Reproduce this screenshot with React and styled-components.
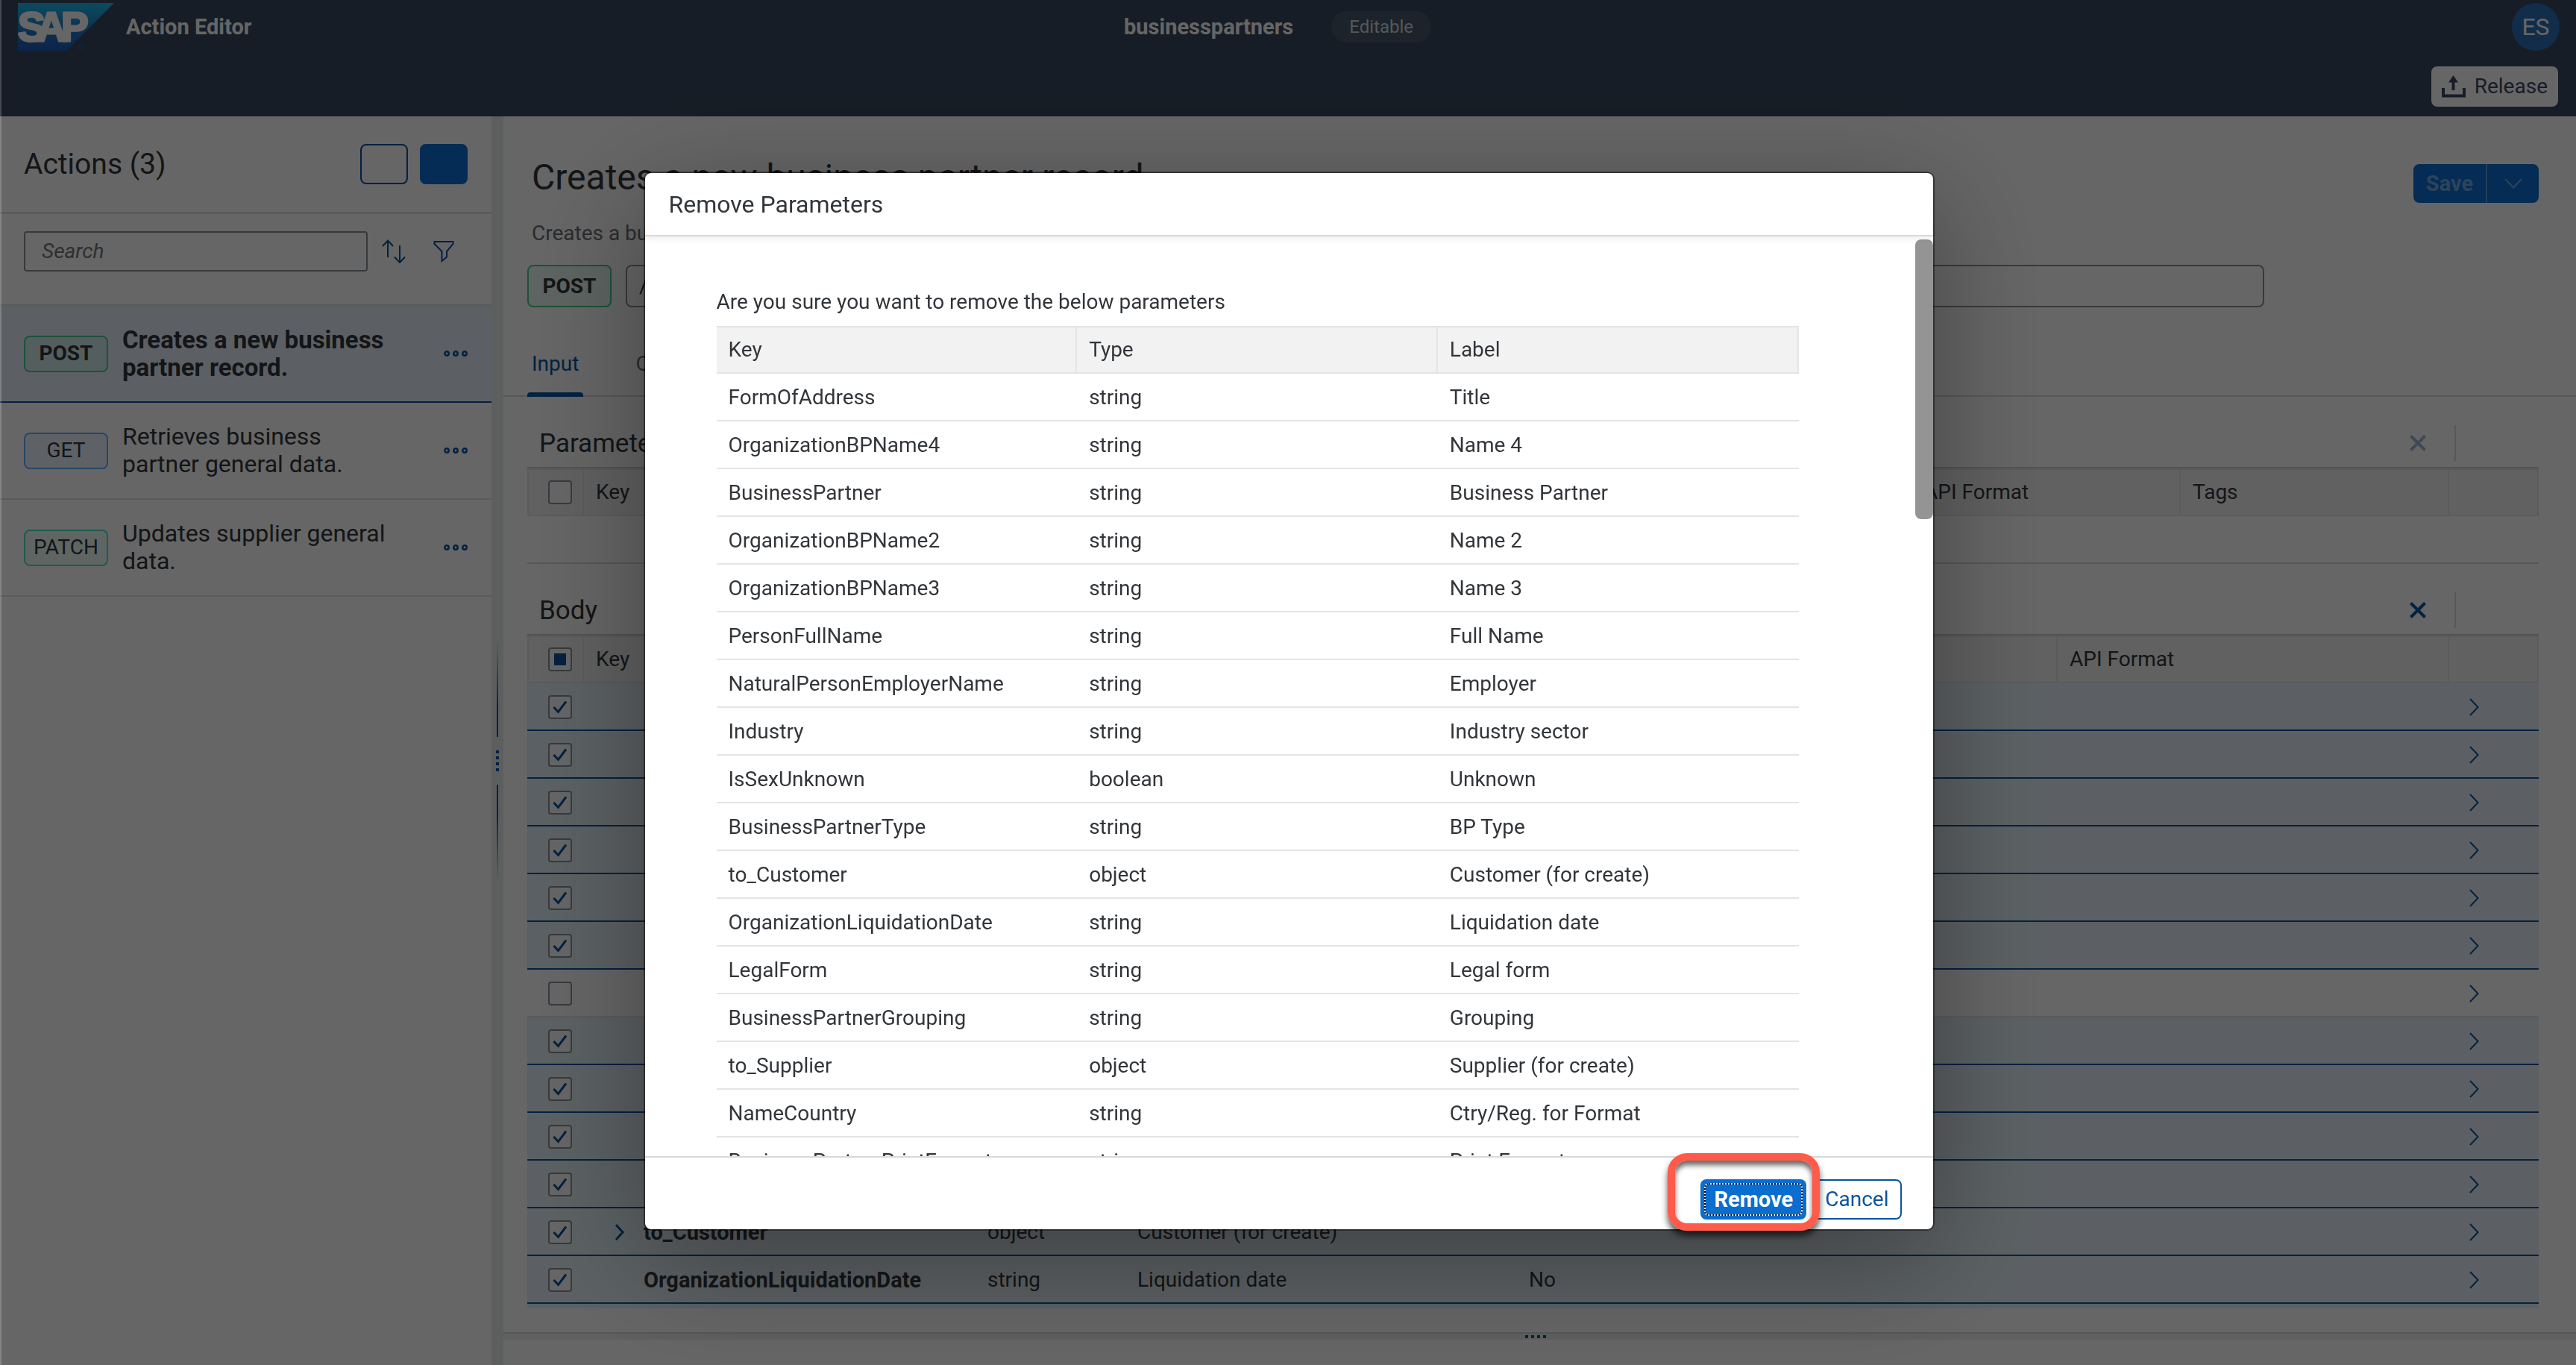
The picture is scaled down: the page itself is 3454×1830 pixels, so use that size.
import React from "react";
import styled, { createGlobalStyle, css } from "styled-components";

const GlobalStyle = createGlobalStyle`
  *, *::before, *::after { box-sizing: border-box; }
  html, body { height: 100%; }
  #root { height: 100%; }
  body {
    margin: 0;
    background: #fff;
    color: #32363a;
    font-family: Roboto, "Liberation Sans", sans-serif;
    font-size: 28px;
    line-height: 40px;
    overflow: hidden;
  }
  button, input { font: inherit; color: inherit; margin: 0; }
  button { padding: 0; border: 0; background: none; cursor: pointer; }
  h1, h2, p { margin: 0; font-weight: 400; }
`;

const brand = "#0854a0";
const line = "#e4e4e4";
const selectedFill = "#e5f1f9";

/* ---------- shell ---------- */

const Page = styled.div`
  height: 100vh;
  display: flex;
  flex-direction: column;
`;

const Header = styled.header`
  flex: none;
  background: #3a495f;
  color: #fff;
`;

const ShellBar = styled.div`
  display: grid;
  grid-template-columns: 1fr auto 1fr;
  align-items: center;
  height: 72px;
  padding: 0 22px 0 24px;
`;

const Brand = styled.div`
  display: flex;
  align-items: center;
  gap: 16px;
  font-size: 29px;
  font-weight: 700;
`;

const Project = styled.div`
  display: flex;
  align-items: center;
  gap: 51px;
  padding-right: 30px;
  font-size: 29px;
  font-weight: 700;
`;

const Pill = styled.span`
  padding: 0 24px;
  border-radius: 21px;
  background: #47596b;
  color: #d5dade;
  font-size: 24px;
  font-weight: 400;
  line-height: 42px;
`;

const Avatar = styled.button`
  justify-self: end;
  width: 64px;
  height: 64px;
  border-radius: 50%;
  background: #2c72b8;
  font-size: 32px;
`;

const ReleaseBar = styled.div`
  display: flex;
  justify-content: flex-end;
  height: 84px;
  padding: 17px 24px 0 0;
`;

const ReleaseButton = styled.button`
  display: flex;
  align-items: center;
  gap: 12px;
  height: 54px;
  padding: 0 14px;
  border-radius: 8px;
  background: #fff;
  color: #3a495f;
`;

const Workspace = styled.div`
  flex: 1;
  min-height: 0;
  display: grid;
  grid-template-columns: 659px 16px minmax(0, 1fr);
`;

/* ---------- side list ---------- */

const SideHeader = styled.div`
  display: flex;
  align-items: center;
  gap: 16px;
  height: 131px;
  padding: 0 32px;
  border-bottom: 3px solid ${line};
`;

const SideTitle = styled.h2`
  flex: 1;
  font-size: 39px;
`;

const SquareButton = styled.button`
  width: 64px;
  height: 54px;
  border: 2px solid ${(p) => (p.$filled ? "#0a6ed1" : brand)};
  border-radius: 8px;
  background: ${(p) => (p.$filled ? "#0a6ed1" : "transparent")};
`;

const SearchRow = styled.div`
  display: flex;
  align-items: center;
  gap: 19px;
  height: 123px;
  padding: 0 50px 22px 32px;
  border-bottom: 2px solid ${line};
`;

const SearchInput = styled.input`
  flex: 1;
  min-width: 0;
  height: 54px;
  padding: 0 22px;
  border: 2px solid #89919a;
  border-radius: 4px;
  background: #fff;
  &::placeholder { color: #74777a; font-style: italic; opacity: 1; }
`;

const IconButton = styled.button`
  display: grid;
  place-items: center;
  color: ${brand};
  opacity: ${(p) => (p.disabled ? 0.4 : 1)};
`;

const FilterButton = styled(IconButton)`
  padding-left: 18px;
`;

const ActionList = styled.ul`
  margin: 0;
  padding: 0;
  list-style: none;
`;

const ActionItem = styled.li`
  display: flex;
  align-items: center;
  height: 130px;
  padding: 0 32px;
  border-bottom: 2px solid ${(p) => (p.$selected ? brand : line)};
  background: ${(p) => (p.$selected ? selectedFill : "#fff")};
  font-weight: ${(p) => (p.$selected ? 700 : 400)};
`;

const methods = {
  POST: ["#49cc90", "rgba(73, 204, 144, .12)"],
  GET: ["#61affe", "rgba(97, 175, 254, .12)"],
  PATCH: ["#50e3c2", "rgba(80, 227, 194, .12)"],
};

const Method = styled.span`
  flex: none;
  display: grid;
  place-items: center;
  width: 113px;
  height: ${(p) => (p.$tall ? 57 : 49)}px;
  border: 2px solid ${(p) => methods[p.$kind][0]};
  border-radius: 8px;
  background: ${(p) => methods[p.$kind][1]};
  font-weight: ${(p) => (p.$bold ? 700 : 400)};
`;

const ActionText = styled.span`
  flex: 1;
  padding: 0 64px 0 19px;
  font-size: ${(p) => (p.$selected ? 33 : 32)}px;
  line-height: 37px;
`;

/* ---------- splitters ---------- */

const Splitter = styled.div`
  display: flex;
  flex-direction: column;
  align-items: center;
  justify-content: center;
  gap: 18px;
  padding-top: 54px;
  background: #e6eeea;
`;

const SplitLine = styled.i`
  width: 2px;
  height: 128px;
  background: linear-gradient(${(p) => (p.$up ? "to top" : "to bottom")}, ${brand} 30%, transparent);
`;

const Grip = styled.span`
  display: flex;
  flex-direction: ${(p) => (p.$row ? "row" : "column")};
  gap: 4px;
  i { width: 4px; height: 4px; background: ${brand}; }
`;

const FootSplitter = styled.div`
  flex: none;
  display: grid;
  place-items: center;
  height: 10px;
  padding-right: 12px;
  border-top: 2px solid #d9d9d9;
  background: #e9efec;
`;

const FootPanel = styled.div`
  flex: none;
  height: 34px;
`;

/* ---------- detail ---------- */

const Main = styled.main`
  display: flex;
  flex-direction: column;
  min-height: 0;
`;

const Detail = styled.div`
  flex: 1;
  min-height: 0;
  overflow: hidden;
`;

const DetailHeader = styled.div`
  padding: 53px 50px 0 32px;
`;

const TitleRow = styled.div`
  display: flex;
  justify-content: space-between;
  height: 63px;
  padding-left: 6px;
`;

const Title = styled.h1`
  font-size: 48px;
  line-height: 58px;
`;

const Subtitle = styled.p`
  padding: 21px 0 0 6px;
  color: #6a6d70;
`;

const SaveGroup = styled.div`
  align-self: flex-end;
  display: flex;
  height: 52px;
  border-radius: 8px;
  background: #0a6ed1;
  color: #73a9df;
`;

const SaveButton = styled.button`
  width: 99px;
  border-right: 2px solid #5f98cf;
  font-size: 29px;
  font-weight: 700;
`;

const SaveMenu = styled.button`
  display: grid;
  place-items: center;
  width: 69px;
`;

const PathRow = styled.div`
  display: flex;
  gap: 19px;
  padding: 22px 368px 0 0;
`;

const PathInput = styled.input`
  flex: 1;
  height: 57px;
  padding: 0 16px;
  border: 2px solid #89919a;
  border-radius: 8px;
  background: #fff;
  &::placeholder { color: #32363a; opacity: 1; }
`;

const Tabs = styled.nav`
  display: flex;
  gap: 64px;
  margin-top: 30px;
  padding-left: 32px;
  border-bottom: 2px solid #d9d9d9;
`;

const Tab = styled.button`
  position: relative;
  height: 88px;
  padding: 4px 6px 0;
  color: ${(p) => (p.$active ? brand : "#6a6d70")};
  ${(p) =>
    p.$active &&
    css`
      &::after {
        content: "";
        position: absolute;
        inset: auto 0 -2px;
        height: 6px;
        border-radius: 4px 4px 0 0;
        background: ${brand};
      }
    `}
`;

const Section = styled.section`
  padding: 30px 50px 0 32px;
`;

const Toolbar = styled.div`
  display: flex;
  align-items: center;
  gap: 38px;
  height: 64px;
  padding: 0 111px 0 16px;
`;

const SectionTitle = styled.h2`
  flex: 1;
  padding-top: 2px;
  font-size: 35px;
`;

const Divider = styled.i`
  width: 2px;
  height: 48px;
  background: #d9d9d9;
`;

const Grid = styled.table`
  width: 100%;
  border-collapse: separate;
  border-spacing: 0;
  table-layout: fixed;
  border-top: 2px solid #d0d0d0;
`;

const Col = styled.col`
  width: ${(p) => (p.$w ? `${p.$w}px` : "auto")};
`;

const HeadCell = styled.th`
  height: 64px;
  padding: 0 16px;
  border: solid ${line};
  border-width: 2px 2px 2px 0;
  background: #f2f2f2;
  font-weight: 400;
  text-align: left;
  &:first-child { border-left-width: 2px; padding: 0 0 0 26px; }
`;

const Row = styled.tr`
  background: ${(p) => (p.$selected ? selectedFill : "#fff")};
  td { border-bottom: 2px solid ${(p) => (p.$selected ? brand : p.$strong ? "#d9d9d9" : line)}; }
`;

const Cell = styled.td`
  height: 64px;
  padding: 2px 16px 0;
  white-space: nowrap;
  &:first-child { padding: 2px 0 0 28px; }
`;

const NavCell = styled(Cell)`
  padding-left: 27px;
`;

const KeyName = styled.div`
  display: flex;
  align-items: center;
  font-size: 29px;
  font-weight: 700;
`;

const ExpandSlot = styled.span`
  display: flex;
  width: 64px;
  padding-left: 25px;
`;

const NextRowEdge = styled.div`
  height: 6px;
  background: ${selectedFill};
`;

const CheckLabel = styled.label`
  display: grid;
  width: 32px;
  height: 32px;
  place-items: center;
  > * { grid-area: 1 / 1; }
  svg { pointer-events: none; }
`;

const CheckBox = styled.input`
  appearance: none;
  width: 32px;
  height: 32px;
  border: 2px solid #89919a;
  border-radius: 4px;
  background: #fff;
`;

/* ---------- dialog ---------- */

const Overlay = styled.div`
  position: fixed;
  inset: 0;
  display: flex;
  justify-content: center;
  padding: 232px 0 182px;
  border-left: 2px solid rgba(255, 255, 255, 0.2);
  background: rgba(0, 0, 0, 0.6);
`;

const Dialog = styled.div`
  display: flex;
  flex-direction: column;
  width: 50vw;
  border-radius: 8px;
  background: #fff;
  box-shadow: 0 0 0 2px rgba(0, 0, 0, 0.42), 0 40px 160px rgba(0, 0, 0, 0.36);
`;

const DialogHeader = styled.div`
  position: relative;
  flex: none;
  height: 85px;
  padding: 0 32px;
  border-bottom: 2px solid #d9d9d9;
  box-shadow: 0 4px 8px rgba(0, 0, 0, 0.06);
`;

const DialogTitle = styled.h2`
  font-size: 32px;
  line-height: 84px;
`;

const DialogBody = styled.div`
  flex: 1;
  min-height: 0;
  display: flex;
  justify-content: space-between;
`;

const DialogContent = styled.div`
  flex: 1;
  overflow: hidden;
  padding: 68px 156px 0 96px;
`;

const Question = styled.p`
  padding-bottom: 12px;
`;

const ScrollTrack = styled.div`
  flex: none;
  width: 24px;
  padding-top: 4px;
`;

const ScrollThumb = styled.div`
  height: 375px;
  border-radius: 8px;
  background: #949494;
`;

const ParamTable = styled.table`
  width: 100%;
  border-spacing: 0;
  table-layout: fixed;
  th, td {
    height: 64px;
    padding: 0 16px;
    border-bottom: 2px solid ${line};
    text-align: left;
    font-weight: 400;
    white-space: nowrap;
  }
  td { padding-top: 2px; }
  th {
    border-top: 2px solid ${line};
    border-right: 2px solid ${line};
    background: #f2f2f2;
  }
`;

const DialogFooter = styled.div`
  flex: none;
  display: flex;
  justify-content: flex-end;
  gap: 8px;
  height: 98px;
  padding: 29px 42px 0 0;
  border-top: 2px solid #d9d9d9;
`;

const Highlight = styled.span`
  position: relative;
  height: 54px;
  &::after {
    content: "";
    position: absolute;
    inset: -35px -18px -15px -44px;
    border: 10px solid #ff5a4a;
    border-radius: 26px;
    box-shadow: 0 7px 8px rgba(0, 0, 0, 0.65), inset 0 6px 7px rgba(0, 0, 0, 0.6);
    pointer-events: none;
  }
`;

const RemoveButton = styled.button`
  position: relative;
  width: 142px;
  height: 54px;
  border-radius: 8px;
  background: #0a6ed1;
  color: #fff;
  font-size: 29px;
  font-weight: 700;
  &::before, &::after {
    content: "";
    position: absolute;
    inset: 5px;
    border: 2px solid #fff;
    border-radius: 6px;
  }
  &::after { border: 2px dotted #000; }
`;

const CancelButton = styled.button`
  height: 54px;
  padding: 0 15px;
  border: 2px solid ${brand};
  border-radius: 8px;
  color: ${brand};
`;

/* ---------- drawings ---------- */

const SapLogo = () => (
  <svg width="129" height="64" viewBox="0 0 129 64" role="img" aria-label="SAP">
    <defs>
      <linearGradient id="sap" x1="0" y1="0" x2="0" y2="1">
        <stop offset="0" stopColor="#1fbcec" />
        <stop offset="0.5" stopColor="#1f7fcc" />
        <stop offset="1" stopColor="#2059bb" />
      </linearGradient>
    </defs>
    <polygon points="0,0 129,0 65,64 0,64" fill="url(#sap)" />
    <text x="0 25 58" y="51" fill="#fff" fontFamily="Liberation Sans, sans-serif" fontWeight="700" fontSize="55" stroke="#fff" strokeWidth="3">SAP</text>
    <circle cx="84" cy="59" r="4" fill="none" stroke="#2059bb" />
    <path d="M82.500 61.500v-5h2q1 1.500 -2 2.500l3 2.500" fill="none" stroke="#2059bb" />
  </svg>
);

const ReleaseIcon = () => (
  <svg width="32" height="30" viewBox="0 0 32 30" fill="none" stroke="currentColor">
    <path d="M2 17v10.500h28V17" strokeWidth="4" />
    <path d="M15.500 20V8" strokeWidth="4" />
    <path d="M9 9.500L15.500 0L22 9.500z" fill="currentColor" stroke="none" />
  </svg>
);

const SortIcon = () => (
  <svg width="32" height="32" viewBox="0 0 32 32" fill="none" stroke="currentColor" strokeWidth="2">
    <path d="M8 24V1M1 9L8 1.500L15 9M24 8v23M17 23.500L24 31L31 23.500" />
  </svg>
);

const FilterIcon = () => (
  <svg width="28" height="30" viewBox="0 0 28 30" fill="none" stroke="currentColor" strokeWidth="2">
    <path d="M1.500 2h25v3L18 15v7.500L11.500 28V15L1.500 5z" />
  </svg>
);

const MoreIcon = () => (
  <svg width="32" height="10" viewBox="0 0 32 10" fill="none" stroke="currentColor" strokeWidth="2.500">
    <circle cx="4" cy="5" r="2.700" />
    <circle cx="16" cy="5" r="2.700" />
    <circle cx="28" cy="5" r="2.700" />
  </svg>
);

const CloseIcon = () => (
  <svg width="22" height="22" viewBox="0 0 22 22" fill="none" stroke="currentColor" strokeWidth="4">
    <path d="M1.500 1.500l19 19M20.500 1.500l-19 19" />
  </svg>
);

const ChevronRight = ({ bold }) => (
  <svg width="13" height="24" viewBox="0 0 13 24" fill="none" stroke={brand} strokeWidth={bold ? 3 : 2}>
    <path d={bold ? "M2 2l9 10-9 10" : "M1 1l10.500 11L1 23"} />
  </svg>
);

const ChevronDown = () => (
  <svg width="24" height="14" viewBox="0 0 24 14" fill="none" stroke="currentColor" strokeWidth="2">
    <path d="M1 1l11 11.500L23 1" />
  </svg>
);

function Check({ label, state }) {
  return (
    <CheckLabel>
      <CheckBox type="checkbox" aria-label={label} checked={state === "on"} readOnly />
      {state === "on" && (
        <svg width="20" height="20" viewBox="0 0 20 20" fill="none" stroke={brand} strokeWidth="3">
          <path d="M1.500 10l6 6.500L18 2.500" />
        </svg>
      )}
      {state === "mixed" && (
        <svg width="16" height="16"><rect width="16" height="16" fill={brand} /></svg>
      )}
    </CheckLabel>
  );
}

const Dots = ({ row }) => (
  <Grip $row={row}><i /><i /><i /><i /></Grip>
);

/* ---------- data ---------- */

const actions = [
  ["POST", "Creates a new business partner record.", true],
  ["GET", "Retrieves business partner general data.", false],
  ["PATCH", "Updates supplier general data.", false],
];

const bodyRows = [
  ...Array.from({ length: 6 }, () => ({ on: true })),
  { on: false },
  ...Array.from({ length: 4 }, () => ({ on: true })),
  { on: true, key: "to_Customer", type: "object", label: "Customer (for create)", nested: true },
  { on: true, key: "OrganizationLiquidationDate", type: "string", label: "Liquidation date", list: "No" },
];

const removed = [
  ["FormOfAddress", "string", "Title"],
  ["OrganizationBPName4", "string", "Name 4"],
  ["BusinessPartner", "string", "Business Partner"],
  ["OrganizationBPName2", "string", "Name 2"],
  ["OrganizationBPName3", "string", "Name 3"],
  ["PersonFullName", "string", "Full Name"],
  ["NaturalPersonEmployerName", "string", "Employer"],
  ["Industry", "string", "Industry sector"],
  ["IsSexUnknown", "boolean", "Unknown"],
  ["BusinessPartnerType", "string", "BP Type"],
  ["to_Customer", "object", "Customer (for create)"],
  ["OrganizationLiquidationDate", "string", "Liquidation date"],
  ["LegalForm", "string", "Legal form"],
  ["BusinessPartnerGrouping", "string", "Grouping"],
  ["to_Supplier", "object", "Supplier (for create)"],
  ["NameCountry", "string", "Ctry/Reg. for Format"],
  ["BusinessPartnerPrintFormat", "string", "Print Format"],
];

function SectionBar({ title, disabled }) {
  return (
    <Toolbar>
      <SectionTitle>{title}</SectionTitle>
      <IconButton aria-label={`Remove from ${title}`} disabled={disabled}><CloseIcon /></IconButton>
      <Divider />
    </Toolbar>
  );
}

export default function App() {
  return (
    <>
      <GlobalStyle />
      <Page>
        <Header>
          <ShellBar>
            <Brand><SapLogo />Action Editor</Brand>
            <Project>businesspartners<Pill>Editable</Pill></Project>
            <Avatar>ES</Avatar>
          </ShellBar>
          <ReleaseBar>
            <ReleaseButton><ReleaseIcon />Release</ReleaseButton>
          </ReleaseBar>
        </Header>

        <Workspace>
          <aside>
            <SideHeader>
              <SideTitle>Actions (3)</SideTitle>
              <SquareButton aria-label="Edit list" />
              <SquareButton aria-label="Add action" $filled />
            </SideHeader>
            <SearchRow>
              <SearchInput placeholder="Search" aria-label="Search" />
              <IconButton aria-label="Sort"><SortIcon /></IconButton>
              <FilterButton aria-label="Filter"><FilterIcon /></FilterButton>
            </SearchRow>
            <ActionList>
              {actions.map(([kind, text, selected]) => (
                <ActionItem key={kind} $selected={selected}>
                  <Method $kind={kind} $bold={selected}>{kind}</Method>
                  <ActionText $selected={selected}>{text}</ActionText>
                  <IconButton aria-label="More"><MoreIcon /></IconButton>
                </ActionItem>
              ))}
            </ActionList>
          </aside>

          <Splitter>
            <SplitLine $up />
            <Dots />
            <SplitLine />
          </Splitter>

          <Main>
            <Detail>
              <DetailHeader>
                <TitleRow>
                  <Title>Creates a new business partner record.</Title>
                  <SaveGroup>
                    <SaveButton>Save</SaveButton>
                    <SaveMenu aria-label="Save options"><ChevronDown /></SaveMenu>
                  </SaveGroup>
                </TitleRow>
                <Subtitle>Creates a business partner</Subtitle>
                <PathRow>
                  <Method $kind="POST" $tall $bold>POST</Method>
                  <PathInput placeholder="/A_BusinessPartner" aria-label="Path" />
                </PathRow>
              </DetailHeader>
              <Tabs>
                <Tab $active>Input</Tab>
                <Tab>Output</Tab>
              </Tabs>

              <Section>
                <SectionBar title="Parameters" disabled />
                <Grid>
                  <colgroup><Col $w={76} /><Col /><Col $w={360} /><Col $w={360} /><Col $w={120} /></colgroup>
                  <thead>
                    <tr>
                      <HeadCell><Check label="Select all parameters" /></HeadCell>
                      <HeadCell>Key</HeadCell>
                      <HeadCell>API Format</HeadCell>
                      <HeadCell>Tags</HeadCell>
                      <HeadCell />
                    </tr>
                  </thead>
                  <tbody><Row $strong><Cell colSpan={5} /></Row></tbody>
                </Grid>
              </Section>

              <Section>
                <SectionBar title="Body" />
                <Grid>
                  <colgroup>
                    <Col $w={76} /><Col $w={525} /><Col $w={201} /><Col $w={525} /><Col /><Col $w={525} /><Col $w={120} />
                  </colgroup>
                  <thead>
                    <tr>
                      <HeadCell><Check label="Select all body fields" state="mixed" /></HeadCell>
                      <HeadCell>Key</HeadCell>
                      <HeadCell /><HeadCell /><HeadCell />
                      <HeadCell>API Format</HeadCell>
                      <HeadCell />
                    </tr>
                  </thead>
                  <tbody>
                    {bodyRows.map((r, i) => (
                      <Row key={i} $selected={r.on}>
                        <Cell><Check label={`Select row ${i + 1}`} state={r.on ? "on" : "off"} /></Cell>
                        <Cell>
                          {r.key && (
                            <KeyName><ExpandSlot>{r.nested && <ChevronRight bold />}</ExpandSlot>{r.key}</KeyName>
                          )}
                        </Cell>
                        <Cell>{r.type}</Cell>
                        <Cell>{r.label}</Cell>
                        <Cell>{r.list}</Cell>
                        <Cell />
                        <NavCell><IconButton aria-label="Open"><ChevronRight /></IconButton></NavCell>
                      </Row>
                    ))}
                  </tbody>
                </Grid>
                <NextRowEdge />
              </Section>
            </Detail>
            <FootSplitter><Dots row /></FootSplitter>
            <FootPanel />
          </Main>
        </Workspace>
      </Page>

      <Overlay>
        <Dialog role="dialog" aria-modal="true" aria-labelledby="dialog-title">
          <DialogHeader><DialogTitle id="dialog-title">Remove Parameters</DialogTitle></DialogHeader>
          <DialogBody>
            <DialogContent>
              <Question>Are you sure you want to remove the below parameters</Question>
              <ParamTable>
                <thead><tr><th>Key</th><th>Type</th><th>Label</th></tr></thead>
                <tbody>
                  {removed.map(([key, type, label]) => (
                    <tr key={key}><td>{key}</td><td>{type}</td><td>{label}</td></tr>
                  ))}
                </tbody>
              </ParamTable>
            </DialogContent>
            <ScrollTrack><ScrollThumb /></ScrollTrack>
          </DialogBody>
          <DialogFooter>
            <Highlight><RemoveButton>Remove</RemoveButton></Highlight>
            <CancelButton>Cancel</CancelButton>
          </DialogFooter>
        </Dialog>
      </Overlay>
    </>
  );
}
